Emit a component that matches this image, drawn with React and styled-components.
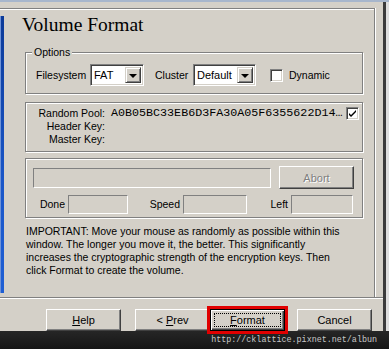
import React from 'react';
import styled, { createGlobalStyle } from 'styled-components';

const GlobalStyle = createGlobalStyle`
  html, body { margin: 0; padding: 0; background: #d4d0c8; }
  body {
    font-family: "Liberation Sans", Arial, sans-serif;
    font-size: 10.5px;
    color: #000;
  }
`;

const Window = styled.div`
  width: 389px;
  height: 349px;
  overflow: hidden;
  display: flex;
  flex-direction: column;
  background: #d4d0c8;
`;

const TopStrip = styled.div`
  flex: none;
  height: 2px;
  background: #a7b6cc;
`;

const Middle = styled.div`
  flex: none;
  display: flex;
  height: 329px;
`;

const Pane = styled.div`
  width: 383px;
  display: flex;
  flex-direction: column;
`;

const EdgeDark = styled.div`
  width: 3px;
  background: #3b3b3b;
`;

const EdgeLight = styled.div`
  width: 3px;
  background: #dedede;
`;

const Frame = styled.div`
  margin-top: 6px;
  width: 375px;
  height: 289px;
  box-sizing: border-box;
  border-top: 1px solid #808080;
  border-right: 1px solid #808080;
  box-shadow: inset 0 1px 0 #fff, 1px 0 0 #fff;
  display: flex;
`;

const SideImage = styled.div`
  flex: none;
  width: 3px;
  height: 277px;
  margin-top: 7px;
  background: linear-gradient(#0c3a98, #1a56c8 60%, #1f5fd4);
  border-left: 1px solid #6f93d8;
`;

const Content = styled.div`
  display: flex;
  flex-direction: column;
  padding: 3px 0 0 21px;
`;

const Title = styled.h1`
  margin: 0 0 0 -3px;
  font-family: "Liberation Serif", "Times New Roman", serif;
  font-weight: normal;
  font-size: 19.5px;
  line-height: 25px;
`;

const GroupBox = styled.div`
  position: relative;
  box-sizing: border-box;
  width: 338px;
  height: ${p => p.$h}px;
  margin-top: ${p => p.$mt}px;
  border: 1px solid #808080;
  box-shadow: inset 1px 1px 0 #fff, 1px 1px 0 #fff;
  padding-top: ${p => p.$pt}px;
`;

const Legend = styled.span`
  position: absolute;
  top: -7px;
  left: 6px;
  padding: 0 2px;
  background: #d4d0c8;
  line-height: 13px;
`;

const Row = styled.div`
  display: flex;
  align-items: center;
  padding-left: ${p => p.$pl || 0}px;
  margin-top: ${p => p.$mt || 0}px;
`;

const Label = styled.span`
  flex: none;
  width: ${p => p.$w}px;
  margin-left: ${p => p.$ml || 0}px;
  text-align: ${p => p.$align || 'left'};
  line-height: 13px;
`;

const Select = styled.div`
  flex: none;
  box-sizing: border-box;
  width: ${p => p.$w}px;
  height: 22px;
  background: #fff;
  border: 1px solid;
  border-color: #808080 #fff #fff #808080;
  box-shadow: inset 1px 1px 0 #404040, inset -1px -1px 0 #d4d0c8;
  display: flex;
  align-items: center;
  padding: 0 2px 0 3px;
  font-size: 11px;
`;

const SelectText = styled.span`
  flex: 1;
`;

const DropButton = styled.span`
  flex: none;
  box-sizing: border-box;
  width: 16px;
  height: 16px;
  background: #d4d0c8;
  border: 1px solid;
  border-color: #d4d0c8 #404040 #404040 #d4d0c8;
  box-shadow: inset 1px 1px 0 #fff, inset -1px -1px 0 #808080;
  display: flex;
  align-items: center;
  justify-content: center;

  &::after {
    content: '';
    border-left: 4px solid transparent;
    border-right: 4px solid transparent;
    border-top: 4px solid #000;
    margin-top: 1px;
  }
`;

const CheckBox = styled.span`
  flex: none;
  box-sizing: border-box;
  width: 13px;
  height: 13px;
  background: #fff;
  border: 1px solid;
  border-color: #808080 #fff #fff #808080;
  box-shadow: inset 1px 1px 0 #404040, inset -1px -1px 0 #d4d0c8;
  display: flex;
  align-items: center;
  justify-content: center;
  margin-left: ${p => p.$ml || 0};
  margin-right: ${p => p.$mr || 0}px;
`;

const KeyRow = styled.div`
  display: flex;
  align-items: center;
  height: 13px;
`;

const KeyValue = styled.span`
  margin-left: 6px;
  font-family: "Liberation Mono", "Courier New", monospace;
  font-size: 11.7px;
  line-height: 13px;
  white-space: nowrap;
`;

const Sunken = styled.div`
  flex: none;
  box-sizing: border-box;
  width: ${p => p.$w}px;
  height: ${p => p.$h}px;
  margin-left: ${p => p.$ml || 0}px;
  border: 1px solid;
  border-color: #808080 #fff #fff #808080;
`;

const Button = styled.div`
  flex: none;
  box-sizing: border-box;
  width: 75px;
  height: ${p => p.$h || 22}px;
  margin-left: ${p => p.$ml || 0}px;
  border: 1px solid;
  border-color: #fff #404040 #404040 #fff;
  box-shadow: inset -1px -1px 0 #808080;
  display: flex;
  align-items: center;
  justify-content: center;
  font-size: 11px;
  color: ${p => (p.$disabled ? '#808080' : '#000')};
  text-shadow: ${p => (p.$disabled ? '1px 1px 0 #fff' : 'none')};

  u { text-decoration: underline; text-underline-offset: 1px; }
`;

const DefaultButton = styled(Button)`
  border: 1px solid #000;
  box-shadow: inset 1px 1px 0 #fff, inset -1px -1px 0 #404040, inset -2px -2px 0 #808080;
  outline: 3px solid #e00000;
  position: relative;

  &::before {
    content: '';
    position: absolute;
    inset: 3px;
    border: 1px dotted #000;
  }
`;

const Notice = styled.p`
  margin: 7px 0 0 1px;
  line-height: 13px;
  width: 325px;
`;

const Separator = styled.div`
  width: 383px;
  border-top: 1px solid #808080;
  border-bottom: 1px solid #fff;
`;

const ButtonRow = styled.div`
  display: flex;
  margin-top: 10px;
  padding-left: 46px;
`;

const Caption = styled.div`
  flex: none;
  height: 18px;
  background: linear-gradient(#262626, #151515);
  display: flex;
  align-items: center;
  justify-content: flex-end;
  padding-right: 12px;
  font-family: "Liberation Mono", "Courier New", monospace;
  font-size: 8.4px;
  color: #c8c8c8;
`;

function Check() {
  return (
    <svg width="9" height="9" viewBox="0 0 9 9">
      <path d="M1 4 L3 6 L8 1 L8 3 L3 8 L1 6 Z" fill="#000" />
    </svg>
  );
}

export default function App() {
  return (
    <Window>
      <GlobalStyle />
      <TopStrip />
      <Middle>
        <Pane>
          <Frame>
            <SideImage />
            <Content>
              <Title>Volume Format</Title>

              <GroupBox $h={42} $mt={15} $pt={11}>
                <Legend>Options</Legend>
                <Row $pl={10}>
                  <Label $w={54}>Filesystem</Label>
                  <Select $w={54}>
                    <SelectText>FAT</SelectText>
                    <DropButton />
                  </Select>
                  <Label $w={38} $ml={11}>Cluster</Label>
                  <Select $w={63}>
                    <SelectText>Default</SelectText>
                    <DropButton />
                  </Select>
                  <CheckBox $ml="14px" />
                  <Label $w={60} $ml={6}>Dynamic</Label>
                </Row>
              </GroupBox>

              <GroupBox $h={50} $mt={8} $pt={4}>
                <KeyRow>
                  <Label $w={79} $align="right">Random Pool:</Label>
                  <KeyValue>A0B05BC33EB6D3FA30A05F6355622D14…</KeyValue>
                  <CheckBox $ml="auto" $mr={3}>
                    <Check />
                  </CheckBox>
                </KeyRow>
                <KeyRow>
                  <Label $w={79} $align="right">Header Key:</Label>
                </KeyRow>
                <KeyRow>
                  <Label $w={79} $align="right">Master Key:</Label>
                </KeyRow>
              </GroupBox>

              <GroupBox $h={60} $mt={6} $pt={7}>
                <Row $pl={7}>
                  <Sunken $w={238} $h={20} />
                  <Button $ml={8} $h={23} $disabled>Abort</Button>
                </Row>
                <Row $pl={7} $mt={6}>
                  <Label $w={32} $align="right">Done</Label>
                  <Sunken $w={60} $h={19} $ml={3} />
                  <Label $w={52} $align="right">Speed</Label>
                  <Sunken $w={64} $h={19} $ml={3} />
                  <Label $w={41} $align="right">Left</Label>
                  <Sunken $w={62} $h={19} $ml={3} />
                </Row>
              </GroupBox>

              <Notice>
                IMPORTANT: Move your mouse as randomly as possible within this
                window. The longer you move it, the better. This significantly
                increases the cryptographic strength of the encryption keys. Then
                click Format to create the volume.
              </Notice>
            </Content>
          </Frame>
          <Separator />
          <ButtonRow>
            <Button><span><u>H</u>elp</span></Button>
            <Button $ml={14}><span>&lt; <u>P</u>rev</span></Button>
            <DefaultButton><span><u>F</u>ormat</span></DefaultButton>
            <Button $ml={12}>Cancel</Button>
          </ButtonRow>
        </Pane>
        <EdgeDark />
        <EdgeLight />
      </Middle>
      <Caption>http://cklattice.pixnet.net/albun</Caption>
    </Window>
  );
}
